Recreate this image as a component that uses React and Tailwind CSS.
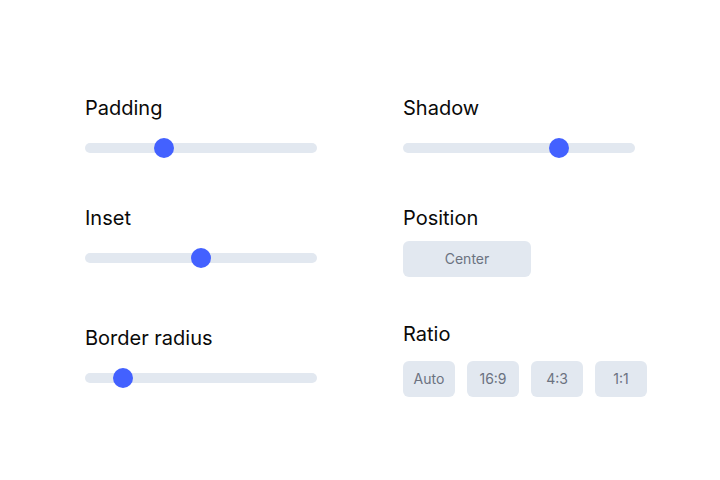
import React from "react";

function Label({ children }) {
  return <div className="text-[20px] leading-7 text-[#0a0a0a]">{children}</div>;
}

function Slider({ label, pct, className = "" }) {
  return (
    <div className={"flex flex-col " + className}>
      <Label>{label}</Label>
      <div className="relative mt-4 h-5 w-[232px]">
        <div className="absolute left-0 right-0 top-[5px] h-[10px] rounded-full bg-[#e2e8f0]" />
        <div
          className="absolute top-0 h-5 w-5 rounded-full bg-[#4361ff]"
          style={{ left: `calc((100% - 20px) * ${pct})` }}
        />
      </div>
    </div>
  );
}

function Btn({ children, w }) {
  return (
    <div
      className={
        "flex h-9 items-center justify-center rounded-md bg-[#e2e8f0] text-sm text-[#6b7280] " + w
      }
    >
      {children}
    </div>
  );
}

export default function App() {
  return (
    <div
      className="h-[480px] w-[720px] bg-white pl-[85px] pt-[94px]"
      style={{ fontFamily: "Inter, 'Noto Sans', sans-serif" }}
    >
      <div className="flex gap-[86px]">
        <div className="flex w-[232px] flex-col">
          <Slider label="Padding" pct={0.325} />
          <Slider label="Inset" pct={0.5} className="mt-[46px]" />
          <Slider label="Border radius" pct={0.132} className="mt-[56px]" />
        </div>
        <div className="flex flex-col">
          <Slider label="Shadow" pct={0.689} />
          <div className="mt-[46px] flex flex-col">
            <Label>Position</Label>
            <div className="mt-[9px] flex">
              <Btn w="w-32">Center</Btn>
            </div>
          </div>
          <div className="mt-[43px] flex flex-col">
            <Label>Ratio</Label>
            <div className="mt-[13px] flex gap-3">
              <Btn w="w-[52px]">Auto</Btn>
              <Btn w="w-[52px]">16:9</Btn>
              <Btn w="w-[52px]">4:3</Btn>
              <Btn w="w-[52px]">1:1</Btn>
            </div>
          </div>
        </div>
      </div>
    </div>
  );
}
